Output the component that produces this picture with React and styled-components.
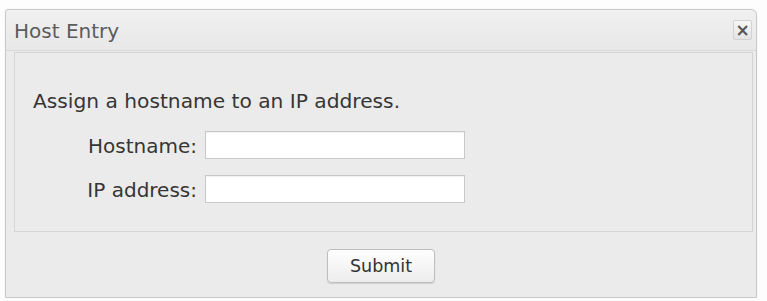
import React from "react";
import styled, { createGlobalStyle } from "styled-components";

const Global = createGlobalStyle`
  html, body {
    margin: 0;
    padding: 0;
    background: #fdfdfd;
  }
  body {
    font-family: "DejaVu Sans", Verdana, sans-serif;
  }
`;

const Dialog = styled.div`
  margin: 9px 0 0 5px;
  width: 750px;
  height: 287px;
  display: flex;
  flex-direction: column;
  background: #ebebeb;
  border: 1px solid #c9c9c9;
  border-radius: 3px 6px 0 0;
  box-shadow: 0 0 2px rgba(0, 0, 0, 0.08);
`;

const TitleBar = styled.div`
  height: 40px;
  display: flex;
  align-items: center;
  justify-content: space-between;
  padding: 0 4px 0 8px;
  border-bottom: 1px solid #d9d9d9;
  background: linear-gradient(#f0f0f0, #e8e8e8);
  border-radius: 3px 6px 0 0;
`;

const Title = styled.span`
  font-size: 20px;
  line-height: 20px;
  color: #5c5c5c;
  padding-top: 2px;
`;

const CloseButton = styled.button`
  width: 19px;
  height: 20px;
  padding: 0;
  display: flex;
  align-items: center;
  justify-content: center;
  background: linear-gradient(#f6f6f6, #e4e4e4);
  border: 1px solid #d2d2d2;
  border-radius: 2px;
  color: #555;
  font-family: "DejaVu Sans", sans-serif;
  font-size: 17px;
  font-weight: bold;
  line-height: 1;
  cursor: pointer;
`;

const Body = styled.div`
  padding: 1px 3px 0 8px;
`;

const Panel = styled.div`
  height: 180px;
  box-sizing: border-box;
  border: 1px solid #d5d5d5;
  background: #ebebeb;
  padding: 38px 18px 0 18px;
`;

const Intro = styled.p`
  margin: 0 0 20px 0;
  font-size: 20.2px;
  line-height: 20px;
  color: #363636;
`;

const Form = styled.div`
  display: grid;
  grid-template-columns: 164px 260px;
  column-gap: 8px;
  row-gap: 16px;
  align-items: center;
`;

const Label = styled.label`
  text-align: right;
  font-size: 20px;
  line-height: 20px;
  color: #363636;
  padding-top: 2px;
`;

const Field = styled.input`
  box-sizing: border-box;
  width: 260px;
  height: 28px;
  background: #fff;
  border: 1px solid #c8c8c8;
  box-shadow: inset 0 1px 1px rgba(0, 0, 0, 0.06);
`;

const Footer = styled.div`
  flex: 1;
  display: flex;
  align-items: center;
  justify-content: center;
  padding-top: 3px;
`;

const SubmitButton = styled.button`
  width: 108px;
  height: 34px;
  background: linear-gradient(#ffffff, #ececec);
  border: 1px solid #bdbdbd;
  border-radius: 4px;
  box-shadow: 0 1px 1px rgba(0, 0, 0, 0.12);
  font-family: "DejaVu Sans", Verdana, sans-serif;
  font-size: 17.5px;
  color: #333;
  cursor: pointer;
`;

export default function App() {
  return (
    <>
      <Global />
      <Dialog>
        <TitleBar>
          <Title>Host Entry</Title>
          <CloseButton aria-label="Close">×</CloseButton>
        </TitleBar>
        <Body>
          <Panel>
            <Intro>Assign a hostname to an IP address.</Intro>
            <Form>
              <Label htmlFor="hostname">Hostname:</Label>
              <Field id="hostname" type="text" />
              <Label htmlFor="ip">IP address:</Label>
              <Field id="ip" type="text" />
            </Form>
          </Panel>
        </Body>
        <Footer>
          <SubmitButton>Submit</SubmitButton>
        </Footer>
      </Dialog>
    </>
  );
}
